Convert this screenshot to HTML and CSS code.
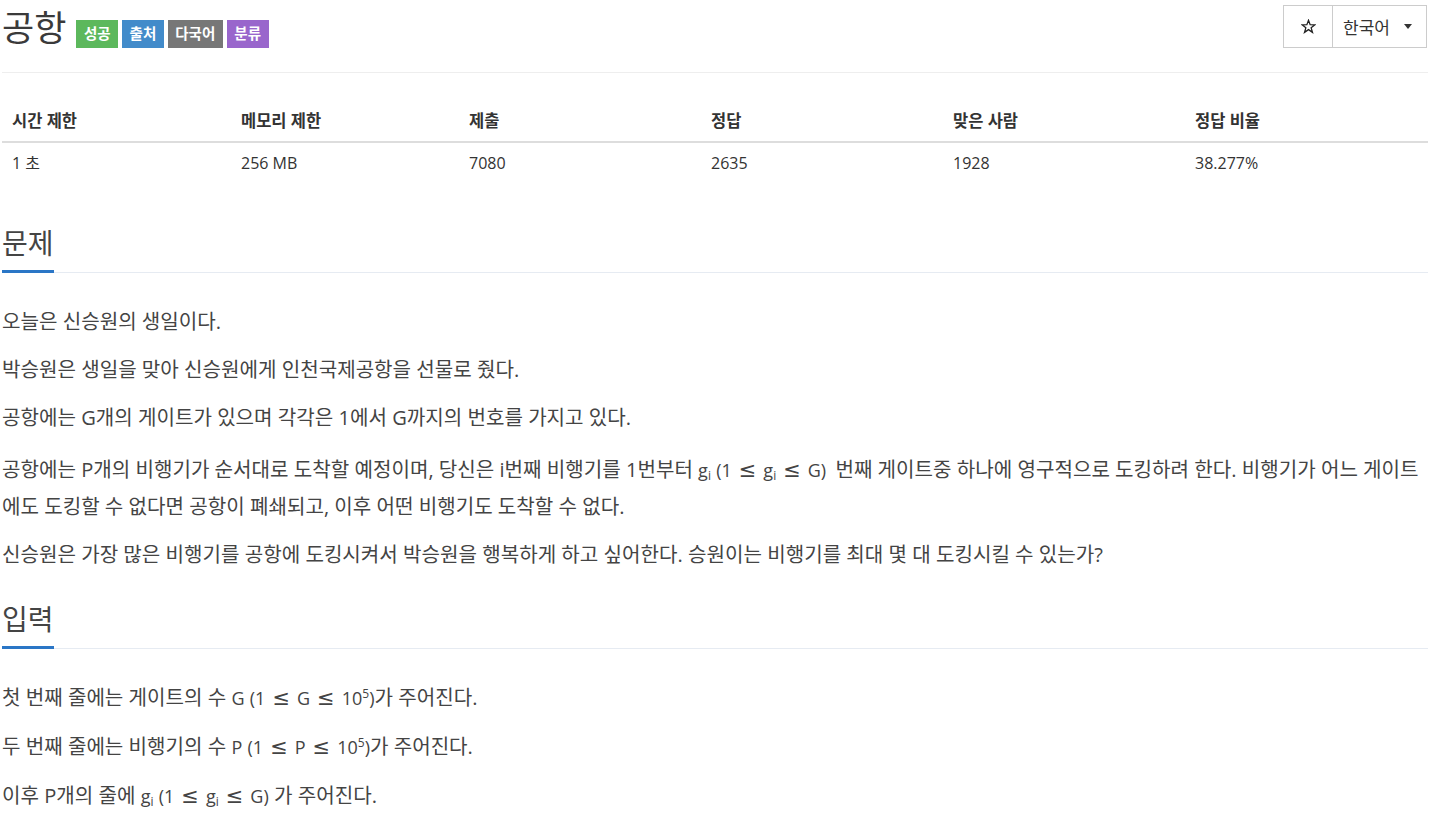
FILE: index.html
```html
<!DOCTYPE html>
<html lang="ko">
<head>
<meta charset="utf-8">
<title>공항</title>
<link rel="stylesheet" href="styles.css">
</head>
<body>
<div class="wrap">
  <div class="page-header">
    <div class="title-line">
      <h1 class="title">공항</h1>
      <span class="label label-green">성공</span>
      <span class="label label-blue">출처</span>
      <span class="label label-gray">다국어</span>
      <span class="label label-purple">분류</span>
    </div>
    <div class="btn-group">
      <button class="btn btn-star" type="button" aria-label="즐겨찾기">
        <svg width="15" height="15" viewBox="0 0 24 24" fill="none" stroke="#222" stroke-width="2" stroke-linejoin="miter"><polygon points="12,2 14.6,9.2 22.3,9.3 16.2,14 18.4,21.4 12,17 5.6,21.4 7.8,14 1.7,9.3 9.4,9.2"/></svg>
      </button>
      <button class="btn btn-lang" type="button">한국어 <span class="caret"></span></button>
    </div>
  </div>

  <table class="info">
    <colgroup>
      <col class="c1"><col class="c2"><col class="c3"><col class="c4"><col class="c5"><col class="c6">
    </colgroup>
    <thead>
      <tr><th>시간 제한</th><th>메모리 제한</th><th>제출</th><th>정답</th><th>맞은 사람</th><th>정답 비율</th></tr>
    </thead>
    <tbody>
      <tr><td>1 초</td><td>256 MB</td><td>7080</td><td>2635</td><td>1928</td><td>38.277%</td></tr>
    </tbody>
  </table>

  <section class="section first">
    <div class="headline"><h2>문제</h2></div>
    <div class="text">
      <p>오늘은 신승원의 생일이다.</p>
      <p>박승원은 생일을 맞아 신승원에게 인천국제공항을 선물로 줬다.</p>
      <p>공항에는 G개의 게이트가 있으며 각각은 1에서 G까지의 번호를 가지고 있다.</p>
      <p>공항에는 P개의 비행기가 순서대로 도착할 예정이며, 당신은 i번째 비행기를 1번부터 <span class="math tall">g<sub>i</sub></span> <span class="math tall after">(1<span class="op">≤</span>g<sub>i</sub><span class="op">≤</span>G)</span> 번째 게이트중 하나에 영구적으로 도킹하려 한다. 비행기가 어느 게이트에도 도킹할 수 없다면 공항이 폐쇄되고, 이후 어떤 비행기도 도착할 수 없다.</p>
      <p>신승원은 가장 많은 비행기를 공항에 도킹시켜서 박승원을 행복하게 하고 싶어한다. 승원이는 비행기를 최대 몇 대 도킹시킬 수 있는가?</p>
    </div>
  </section>

  <section class="section">
    <div class="headline"><h2>입력</h2></div>
    <div class="text input">
      <p>첫 번째 줄에는 게이트의 수 <span class="math">G</span> <span class="math">(1<span class="op">≤</span>G<span class="op">≤</span>10<sup>5</sup>)</span>가 주어진다.</p>
      <p>두 번째 줄에는 비행기의 수 <span class="math">P</span> <span class="math">(1<span class="op">≤</span>P<span class="op">≤</span>10<sup>5</sup>)</span>가 주어진다.</p>
      <p>이후 P개의 줄에 <span class="math">g<sub>i</sub></span> <span class="math">(1<span class="op">≤</span>g<sub>i</sub><span class="op">≤</span>G)</span> 가 주어진다.</p>
    </div>
  </section>
</div>
</body>
</html>
```

FILE: styles.css
```css
* { box-sizing: border-box; }

html, body {
  margin: 0;
  padding: 0;
  background: #fff;
}

body {
  font-family: "Open Sans", "Noto Sans CJK KR", sans-serif;
  color: #333;
  font-size: 16px;
}

.wrap {
  padding: 0 2px;
}

.page-header {
  display: flex;
  justify-content: space-between;
  align-items: flex-start;
  height: 73px;
  border-bottom: 1px solid #eee;
}

.title-line {
  display: flex;
  align-items: flex-start;
  gap: 4px;
  padding-top: 5px;
}

.title {
  margin: 0 6px 0 0;
  font-size: 35px;
  font-weight: 400;
  line-height: 42px;
  color: #3a3a3a;
  font-family: "Noto Sans CJK KR", sans-serif;
}

.label {
  display: inline-block;
  height: 28px;
  line-height: 28px;
  padding: 0 7.5px;
  color: #fff;
  font-size: 14.5px;
  font-weight: 700;
  margin-top: 15px;
}

.label-green { background: #5cb85c; }
.label-blue { background: #428bca; }
.label-gray { background: #777; }
.label-purple { background: #9966cc; }

.btn-group {
  display: flex;
  margin-top: 5px;
  margin-right: 1px;
}

.btn {
  font-family: "Open Sans", "Noto Sans CJK KR", sans-serif;
  font-size: 17px;
  color: #333;
  background: #fff;
  border: 1px solid #ccc;
  height: 43px;
  margin: 0;
  display: flex;
  align-items: center;
}

.btn-star {
  width: 50px;
  justify-content: center;
  padding: 0;
}

.btn-lang {
  width: 94px;
  border-left: none;
  padding: 0 0 0 10px;
  gap: 14px;
}

.caret {
  display: inline-block;
  width: 0;
  height: 0;
  border-top: 5px solid #333;
  border-left: 4px solid transparent;
  border-right: 4px solid transparent;
}

.info {
  width: 1426px;
  border-collapse: collapse;
  margin-top: 27px;
  table-layout: fixed;
}

.c1 { width: 229px; }
.c2 { width: 228px; }
.c3 { width: 242px; }
.c4 { width: 242px; }
.c5 { width: 242px; }
.c6 { width: 243px; }

.info th, .info td {
  text-align: left;
  padding: 9px 10px;
  line-height: 23px;
}

.info th {
  font-size: 16.5px;
  font-weight: 700;
  border-bottom: 2px solid #ddd;
}

.info td {
  font-size: 16px;
}

.section {
  margin-top: 12px;
}

.section.first {
  margin-top: 40px;
}

.headline {
  border-bottom: 1px solid #e6ebf2;
  margin-bottom: 34px;
}

.headline h2 {
  display: inline-block;
  margin: 0 0 -1px 0;
  font-size: 28px;
  font-weight: 400;
  line-height: 36px;
  padding-bottom: 10px;
  color: #444;
  border-bottom: 3px solid #2a76c6;
  font-family: "Noto Sans CJK KR", sans-serif;
}

.text {
  display: flex;
  flex-direction: column;
}

.text p {
  margin: 0 0 18px 0;
  font-size: 20.1px;
  line-height: 30px;
  color: #444;
}

.text.input p {
  margin-bottom: 19px;
}

.math {
  white-space: nowrap;
  font-family: "Open Sans", "DejaVu Sans", sans-serif;
  font-size: 18px;
}

.math.tall {
  display: inline-block;
  padding: 4px 0 7px;
  line-height: 30px;
}

.math.after {
  margin-right: 4px;
}

.math sub {
  font-size: 12px;
  vertical-align: -3px;
  line-height: 0;
}

.math sup {
  font-size: 12px;
  vertical-align: 7px;
  line-height: 0;
}

.op {
  font-family: "DejaVu Sans", sans-serif;
  font-size: 21px;
  margin: 0 7px;
}
```
